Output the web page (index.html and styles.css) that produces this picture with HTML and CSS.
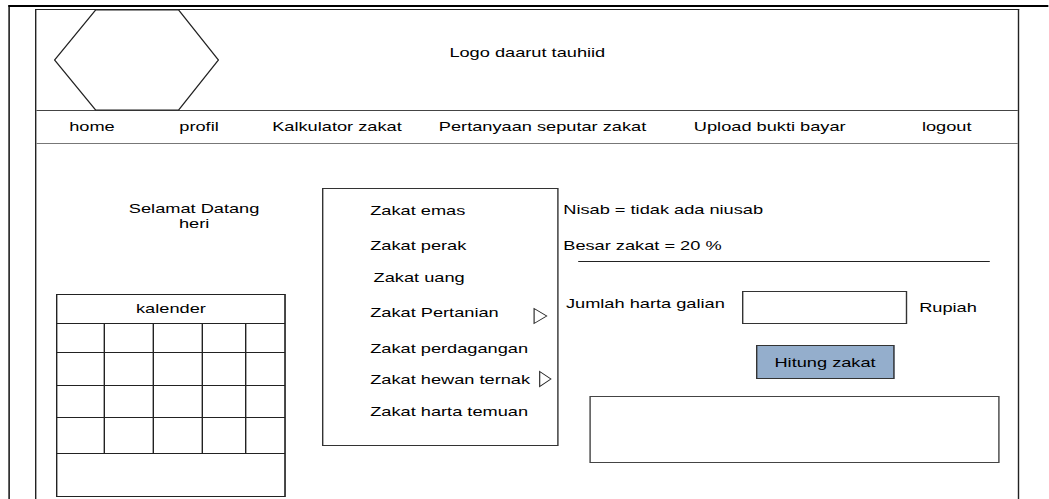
FILE: index.html
```html
<!DOCTYPE html>
<html lang="id">
<head>
    <meta charset="UTF-8">
    <meta name="viewport" content="width=device-width, initial-scale=1.0">
    <title>Kalkulator Zakat</title>
    <link rel="stylesheet" href="styles.css">
</head>
<body>
    <div class="sheet">
        <div class="frame-outer">
            <div class="frame">
                <header class="top">
                    <div>
                        <svg class="logo-shape" width="117" height="100" viewBox="0 0 117 100">
                            <polygon points="0,50 29.3,0 88.6,0 117,50 88.6,100 29.3,100" fill="none" stroke="#222" stroke-width="1"/>
                        </svg>
                    </div>
                    <div class="logo-text">Logo daarut tauhiid</div>
                    <div></div>
                </header>

                <nav class="menu-bar">
                    <a href="#">home</a>
                    <a href="#">profil</a>
                    <a href="#">Kalkulator zakat</a>
                    <a href="#">Pertanyaan seputar zakat</a>
                    <a href="#">Upload bukti bayar</a>
                    <a href="#">logout</a>
                </nav>

                <main class="content">
                    <section class="side">
                        <p class="greeting">Selamat Datang<br>heri</p>
                        <div class="calendar">
                            <div class="cal-head">kalender</div>
                            <div></div><div></div><div></div><div></div><div></div>
                            <div></div><div></div><div></div><div></div><div></div>
                            <div></div><div></div><div></div><div></div><div></div>
                            <div></div><div></div><div></div><div></div><div></div>
                            <div class="cal-foot"></div>
                        </div>
                    </section>

                    <ul class="zakat-list">
                        <li>Zakat emas</li>
                        <li>Zakat perak</li>
                        <li class="nudge">Zakat uang</li>
                        <li>Zakat Pertanian
                            <svg class="arrow" width="10" height="16" viewBox="0 0 10 16"><polygon points="0.5,0.5 9.5,8 0.5,15.5" fill="#fff" stroke="#222" stroke-width="0.8"/></svg>
                        </li>
                        <li>Zakat perdagangan</li>
                        <li>Zakat hewan ternak
                            <svg class="arrow" width="9" height="16" viewBox="0 0 9 16"><polygon points="0.5,0.5 8.5,8 0.5,15.5" fill="#fff" stroke="#222" stroke-width="0.8"/></svg>
                        </li>
                        <li>Zakat harta temuan</li>
                    </ul>

                    <section class="calc">
                        <p class="info">Nisab = tidak ada niusab</p>
                        <p class="info">Besar zakat = 20 %</p>
                        <hr class="divider">
                        <div class="amount-row">
                            <label for="harta">Jumlah harta galian</label>
                            <input type="text" id="harta">
                            <span>Rupiah</span>
                        </div>
                        <button type="button" class="hitung">Hitung zakat</button>
                        <div class="result"></div>
                    </section>
                </main>
            </div>
        </div>
    </div>
</body>
</html>
```

FILE: styles.css
```css
html, body {
    margin: 0;
    overflow: hidden;
    background: #fff;
}
body {
    font-family: "Liberation Sans", Arial, sans-serif;
    font-size: 13px;
    line-height: 15px;
    color: #000;
}
/* the mockup is stretched sideways, so lay out narrow and stretch */
.sheet {
    width: 749.3px;
    height: 499px;
    overflow: hidden;
    transform: scaleX(1.4);
    transform-origin: 0 0;
}
.frame-outer {
    margin: 5px 0 0 6.4px;
    width: 723.5px;
    height: 490px;
    border-top: 2px solid #000;
    border-left: 1.6px solid #000;
    padding: 2px 0 0 17.75px;
}
.frame {
    width: 703px;
    height: 490px;
    box-sizing: border-box;
    border: 1px solid #222;
    border-bottom: 0;
}

/* header */
.top {
    display: grid;
    grid-template-columns: 1fr auto 1fr;
    height: 100px;
    border-bottom: 1px solid #444;
}
.logo-shape {
    display: block;
    margin-left: 13.3px;
    overflow: visible;
}
.logo-text {
    margin-top: 35px;
}

/* menu */
.menu-bar {
    display: flex;
    height: 24px;
    padding: 8px 0 0 23.3px;
    border-bottom: 1px solid #777;
}
.menu-bar a {
    color: inherit;
    text-decoration: none;
    white-space: nowrap;
}
.menu-bar a:nth-child(2) { margin-left: 46.1px; }
.menu-bar a:nth-child(3) { margin-left: 38.2px; }
.menu-bar a:nth-child(4) { margin-left: 26.5px; }
.menu-bar a:nth-child(5) { margin-left: 34px; }
.menu-bar a:nth-child(6) { margin-left: 54.5px; }

/* body */
.content {
    display: flex;
    align-items: flex-start;
}
.side {
    width: 204px;
    flex: none;
}
.greeting {
    margin: 57px 0 0 14px;
    width: 197px;
    text-align: center;
}
.calendar {
    margin: 63px 0 0 14px;
    width: 161.9px;
    display: grid;
    grid-template-columns: 33.3px 33.3px 34px 30.4px 1fr;
    grid-template-rows: 28px 28px 32px 31px 35px 42px;
    gap: 1px;
    background: #222;
    border: 1px solid #222;
}
.calendar > div {
    background: #fff;
}
.cal-head,
.cal-foot {
    grid-column: 1 / -1;
}
.cal-head {
    text-align: center;
    line-height: 28px;
}

.zakat-list {
    list-style: none;
    flex: none;
    margin: 44px 0 0;
    width: 168.6px;
    height: 258px;
    box-sizing: border-box;
    border: 1px solid #333;
    padding: 13.5px 3.5px 0 33.3px;
}
.zakat-list li {
    display: flex;
    align-items: center;
    height: 15px;
    white-space: nowrap;
}
/* items were placed by hand in the mockup, spacing is uneven */
.zakat-list li:nth-child(2) { margin-top: 20.7px; }
.zakat-list li:nth-child(3) { margin-top: 17.3px; }
.zakat-list li:nth-child(4) { margin-top: 19.7px; }
.zakat-list li:nth-child(5) { margin-top: 20.6px; }
.zakat-list li:nth-child(6) { margin-top: 16px; }
.zakat-list li:nth-child(7) { margin-top: 17.4px; }
.zakat-list .nudge {
    margin-left: 2.4px;
}
.arrow {
    flex: none;
    margin-left: auto;
    overflow: visible;
}
.zakat-list li:nth-child(4) .arrow {
    margin-top: 6px;
    margin-right: 3px;
}

.calc {
    flex: 1;
    padding: 58px 0 0 3.6px;
}
.info {
    margin: 0;
}
.info + .info {
    margin-top: 20.5px;
}
.divider {
    border: 0;
    border-top: 1px solid #222;
    height: 0;
    width: 293.3px;
    margin: 8.5px 0 0 10.9px;
}
.amount-row {
    display: flex;
    align-items: center;
    margin-top: 28.7px;
}
.amount-row label {
    margin: 0 0 8px 1.9px;
}
.amount-row input {
    margin-left: 12.7px;
    width: 117.5px;
    height: 33.6px;
    box-sizing: border-box;
    border: 1px solid #333;
    border-radius: 0;
    padding: 0;
    font: inherit;
}
.amount-row span {
    margin-left: 8.7px;
}
.hitung {
    display: block;
    margin: 21px 0 0 137.6px;
    width: 98.8px;
    height: 33.7px;
    padding: 0;
    background: #94aecc;
    border: 1px solid #333;
    border-radius: 0;
    font: inherit;
    color: #000;
}
.result {
    margin: 16.7px 0 0 18.5px;
    width: 292.9px;
    height: 67px;
    box-sizing: border-box;
    border: 1px solid #444;
}
```
